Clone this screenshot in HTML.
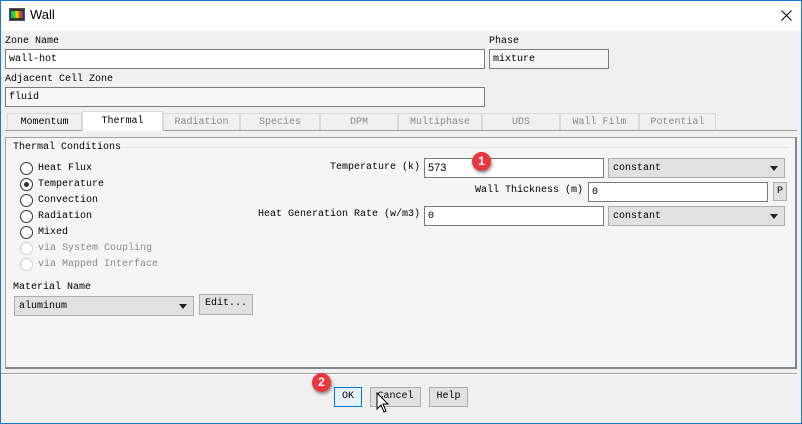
<!DOCTYPE html>
<html><head><meta charset="utf-8"><style>
*{box-sizing:border-box;margin:0;padding:0}
body{width:802px;height:424px;overflow:hidden;background:#f0f0f0;font-family:"Liberation Mono",monospace;font-size:10px;color:#000;position:relative}
.a{position:absolute;white-space:nowrap}
.win{position:absolute;left:0;top:0;width:802px;height:424px;border:1px solid #1979ca;border-top:none}
.title{position:absolute;left:0;top:0;width:802px;height:31px;background:#fff;border-top:1px solid #1979ca}
.inp{position:absolute;background:#fff;border:1px solid #7a7a7a;padding-left:3px;line-height:19px}
.dd{position:absolute;background:#e1e1e1;border:1px solid #adadad;padding-left:4px;line-height:19px}
.dd:after{content:"";position:absolute;right:6px;top:7px;border-left:4px solid transparent;border-right:4px solid transparent;border-top:5px solid #222}
.tab{position:absolute;top:113px;height:17px;background:#f0f0f0;border:1px solid #d9d9d9;border-bottom:none;text-align:center;line-height:17px;color:#8a8a8a}
.r{position:absolute;left:20px;width:13px;height:13px;border:1px solid #333;border-radius:50%;background:#fff}
.rl{position:absolute;left:38px;line-height:13px}
.btn{position:absolute;background:#e1e1e1;border:1px solid #adadad;text-align:center;line-height:18px}
.badge{position:absolute;width:19px;height:19px;border-radius:50%;background:#e8383d;color:#fff;font-family:"Liberation Sans",sans-serif;font-size:12px;font-weight:bold;text-align:center;line-height:19px;box-shadow:1px 2px 3px rgba(0,0,0,.45)}
</style></head><body>
<div class="title">
<div class="a" style="left:9px;top:7px;width:16px;height:13px;background:#333;border:1px solid #555">
<div style="position:absolute;left:1px;top:2px;width:12px;height:7px;background:linear-gradient(90deg,#1aa0ff,#19d81f,#f2e200,#ff3300,#1a60ff)"></div></div>
<div class="a" style="left:30px;top:6px;font-family:'Liberation Sans',sans-serif;font-size:13px">Wall</div>
<svg class="a" style="left:781px;top:9px" width="11" height="11" viewBox="0 0 11 11"><path d="M0.5 0.5 L10.5 10.5 M10.5 0.5 L0.5 10.5" stroke="#000" stroke-width="1"/></svg>
</div>
<div class="a" style="left:5px;top:36px">Zone Name</div>
<div class="inp" style="left:5px;top:49px;width:480px;height:20px">wall-hot</div>
<div class="a" style="left:489px;top:36px">Phase</div>
<div class="inp" style="left:489px;top:49px;width:120px;height:20px;background:#f5f5f5">mixture</div>
<div class="a" style="left:5px;top:74px">Adjacent Cell Zone</div>
<div class="inp" style="left:5px;top:87px;width:480px;height:20px;background:#f7f7f7">fluid</div>

<div class="a" style="left:5px;top:130px;width:792px;border-top:1px solid #a0a0a0"></div>
<div class="tab" style="left:7px;width:75px;color:#000">Momentum</div>
<div class="tab" style="left:82px;top:111px;height:20px;width:81px;background:#fff;color:#000;line-height:19px;border-color:#d9d9d9">Thermal</div>
<div class="tab" style="left:163px;width:77px">Radiation</div>
<div class="tab" style="left:240px;width:80px">Species</div>
<div class="tab" style="left:320px;width:78px">DPM</div>
<div class="tab" style="left:398px;width:84px">Multiphase</div>
<div class="tab" style="left:482px;width:78px">UDS</div>
<div class="tab" style="left:560px;width:79px">Wall Film</div>
<div class="tab" style="left:639px;width:77px">Potential</div>

<div class="a" style="left:5px;top:137px;width:792px;height:232px;background:#f5f5f5;border:1px solid #a0a0a0;border-right:2px solid #7d8790;border-bottom:2px solid #7d8790"></div>
<div class="a" style="left:124px;top:147px;width:665px;border-top:1px solid #e3e3e3"></div>
<div class="a" style="left:13px;top:142px">Thermal Conditions</div>

<div class="r" style="top:162px"></div><div class="rl" style="top:162px">Heat Flux</div>
<div class="r" style="top:178px"><div style="position:absolute;left:3px;top:3px;width:5px;height:5px;border-radius:50%;background:#333"></div></div><div class="rl" style="top:178px">Temperature</div>
<div class="r" style="top:194px"></div><div class="rl" style="top:194px">Convection</div>
<div class="r" style="top:210px"></div><div class="rl" style="top:210px">Radiation</div>
<div class="r" style="top:226px"></div><div class="rl" style="top:226px">Mixed</div>
<div class="r" style="top:242px;border-color:#ccc"></div><div class="rl" style="top:242px;color:#8a8a8a">via System Coupling</div>
<div class="r" style="top:258px;border-color:#ccc"></div><div class="rl" style="top:258px;color:#8a8a8a">via Mapped Interface</div>

<div class="a" style="right:382px;top:162px">Temperature (k)</div>
<div class="inp" style="left:424px;top:158px;width:180px;height:20px;font-family:'Liberation Sans',sans-serif;font-size:11px">573</div>
<div class="dd" style="left:608px;top:158px;width:177px;height:20px">constant</div>
<div class="a" style="right:219px;top:185px">Wall Thickness (m)</div>
<div class="inp" style="left:588px;top:182px;width:180px;height:20px">0</div>
<div class="btn" style="left:773px;top:182px;width:14px;height:19px;line-height:17px">P</div>
<div class="a" style="right:382px;top:209px">Heat Generation Rate (w/m3)</div>
<div class="inp" style="left:424px;top:206px;width:180px;height:20px">0</div>
<div class="dd" style="left:608px;top:206px;width:177px;height:20px">constant</div>

<div class="a" style="left:13px;top:282px">Material Name</div>
<div class="dd" style="left:14px;top:296px;width:180px;height:20px">aluminum</div>
<div class="btn" style="left:199px;top:294px;width:54px;height:21px">Edit...</div>

<div class="a" style="left:0;top:373px;width:797px;border-top:1px solid #a0a0a0;border-bottom:1px solid #fff"></div>
<div class="btn" style="left:334px;top:387px;width:28px;height:20px;border-color:#0078d7;background:#e5f1fb">OK</div>
<div class="btn" style="left:370px;top:387px;width:51px;height:20px">Cancel</div>
<div class="btn" style="left:429px;top:387px;width:39px;height:20px">Help</div>

<div class="badge" style="left:472px;top:152px">1</div>
<div class="badge" style="left:312px;top:373px">2</div>
<svg class="a" style="left:376px;top:392px" width="14" height="22" viewBox="0 0 14 22"><path d="M1 1 L1 17 L5 13 L8 20 L10 19 L7 12 L12 12 Z" fill="#fff" stroke="#000" stroke-width="1"/></svg>
<div class="win"></div>
</body></html>
